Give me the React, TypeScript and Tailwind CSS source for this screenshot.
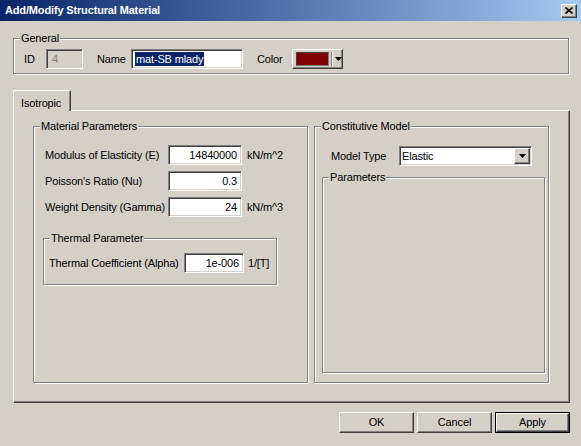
import React from 'react';

const sunken =
  'border border-t-[#808080] border-l-[#808080] border-b-white border-r-white shadow-[inset_1px_1px_0_#404040,inset_-1px_-1px_0_#d4d0c8]';
const raised =
  'border border-t-white border-l-white border-b-[#404040] border-r-[#404040] shadow-[inset_-1px_-1px_0_#808080]';

function Group({ title, className, children }: { title: string; className?: string; children?: React.ReactNode }) {
  return (
    <div className={`relative border border-[#808080] shadow-[inset_1px_1px_0_#fff,1px_1px_0_#fff] ${className ?? ''}`}>
      <span className="absolute -top-[7px] left-[6px] bg-[#d4d0c8] px-[1px] leading-[13px] text-black">{title}</span>
      {children}
    </div>
  );
}

function NumField({ value, width }: { value: string; width: string }) {
  return (
    <div className={`${sunken} ${width} h-[20px] bg-white flex items-center justify-end pr-[4px] leading-none`}>{value}</div>
  );
}

function Arrow() {
  return (
    <svg width="7" height="4" viewBox="0 0 7 4">
      <path d="M0 0h7L3.5 4z" fill="#000" />
    </svg>
  );
}

export default function App() {
  const rows = [
    { label: 'Modulus of Elasticity (E)', value: '14840000', unit: 'kN/m^2' },
    { label: "Poisson's Ratio (Nu)", value: '0.3', unit: '' },
    { label: 'Weight Density (Gamma)', value: '24', unit: 'kN/m^3' },
  ];

  return (
    <div className="w-[581px] h-[446px] bg-[#d4d0c8] flex flex-col text-[11px] tracking-[-0.15px] text-black font-['Liberation_Sans',Arial,sans-serif] overflow-hidden">
      {/* title bar */}
      <div className="h-[21px] flex items-center justify-between pl-[5px] pr-[4px] bg-gradient-to-r from-[#0a246a] to-[#a6caf0]">
        <span className="text-white font-bold text-[11px]">Add/Modify Structural Material</span>
        <div className={`${raised} w-[16px] h-[14px] bg-[#d4d0c8] flex items-center justify-center`}>
          <svg width="8" height="7" viewBox="0 0 8 7">
            <path d="M0.5 0.5l7 6M7.5 0.5l-7 6" stroke="#000" strokeWidth="1.6" />
          </svg>
        </div>
      </div>

      <div className="flex flex-col pl-[13px] pr-[11px] pt-[17px]">
        {/* General */}
        <Group title="General" className="h-[36px] mr-[1px] pl-[10px] pt-[10px] flex items-start">
          <span className="w-[22px] h-[20px] flex items-center">ID</span>
          <div className={`${sunken} w-[37px] h-[20px] bg-[#d4d0c8] flex items-center pl-[5px] text-[#808080]`}>4</div>
          <span className="ml-[14px] w-[34px] h-[20px] flex items-center">Name</span>
          <div className={`${sunken} w-[112px] h-[20px] bg-white flex items-center pl-[3px]`}>
            <span className="bg-[#0a246a] text-white leading-[14px] px-[1px]">mat-SB mlady</span>
          </div>
          <span className="ml-[14px] w-[35px] h-[20px] flex items-center">Color</span>
          <div className={`${raised} w-[51px] h-[20px] bg-[#d4d0c8] flex items-center pl-[3px]`}>
            <div className="w-[33px] h-[14px] border border-t-[#404040] border-l-[#404040] border-b-[#808080] border-r-[#808080] bg-[#800000]" />
            <div className="ml-[2px] w-[2px] h-[14px] border-l border-l-[#808080] border-r border-r-white" />
            <div className="ml-[2px]">
              <Arrow />
            </div>
          </div>
        </Group>

        {/* tab */}
        <div className="mt-[16px] flex">
          <div className="relative z-10 -mb-[1px] w-[58px] h-[21px] bg-[#d4d0c8] border-l border-t border-l-white border-t-white border-r border-r-[#404040] rounded-t-[2px] shadow-[inset_-1px_0_0_#808080] pl-[7px] pt-[4px]">
            Isotropic
          </div>
        </div>

        <div className="h-[293px] border-t border-l border-t-white border-l-white border-r border-b border-r-[#404040] border-b-[#404040] shadow-[inset_-1px_-1px_0_#808080] pl-[19px] pt-[15px] pr-[18px] pb-[18px] flex">
          {/* Material Parameters */}
          <Group title="Material Parameters" className="w-[275px] h-[257px] pt-[18px] pl-[11px] flex flex-col">
            {rows.map((r, i) => (
              <div key={r.label} className={`flex items-center h-[20px] ${i > 0 ? 'mt-[6px]' : ''}`}>
                <span className="w-[123px] whitespace-nowrap">{r.label}</span>
                <NumField value={r.value} width="w-[74px]" />
                <span className="ml-[5px]">{r.unit}</span>
              </div>
            ))}
            <Group title="Thermal Parameter" className="mt-[21px] -ml-[2px] w-[234px] h-[47px] pt-[14px] pl-[5px]">
              <div className="flex items-center h-[20px]">
                <span className="w-[135px] whitespace-nowrap">Thermal Coefficient (Alpha)</span>
                <NumField value="1e-006" width="w-[60px]" />
                <span className="ml-[4px]">1/[T]</span>
              </div>
            </Group>
          </Group>

          {/* Constitutive Model */}
          <Group title="Constitutive Model" className="ml-[6px] w-[235px] h-[257px] pt-[19px] pb-[9px] flex flex-col">
            <div className="flex items-center h-[20px] pl-[16px]">
              <span className="w-[68px]">Model Type</span>
              <div className={`${sunken} w-[133px] h-[20px] bg-white flex items-center pl-[2px] pr-[1px]`}>
                <span className="flex-1">Elastic</span>
                <div className={`${raised} w-[16px] h-[16px] bg-[#d4d0c8] flex items-center justify-center`}>
                  <Arrow />
                </div>
              </div>
            </div>
            <Group title="Parameters" className="mt-[11px] ml-[7px] w-[223px] flex-1" />
          </Group>
        </div>

        {/* buttons */}
        <div className="mt-[9px] flex justify-end gap-[3px]">
          <button className={`${raised} w-[75px] h-[21px] bg-[#d4d0c8]`}>OK</button>
          <button className={`${raised} w-[75px] h-[21px] bg-[#d4d0c8]`}>Cancel</button>
          <div className="w-[75px] h-[21px] border border-black">
            <button className={`${raised} w-full h-full bg-[#d4d0c8]`}>Apply</button>
          </div>
        </div>
      </div>
    </div>
  );
}
